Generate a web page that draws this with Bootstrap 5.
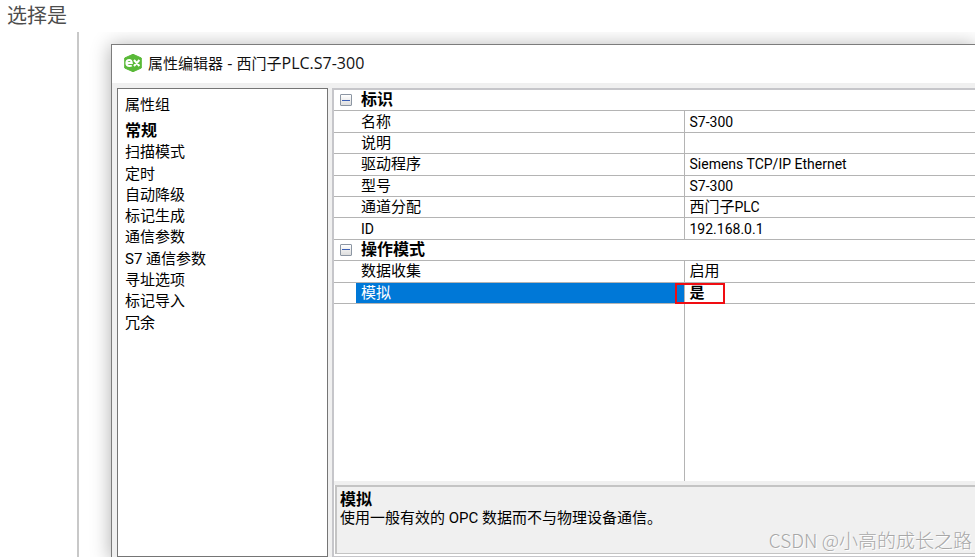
<!DOCTYPE html>
<html lang="zh-CN">
<head>
<meta charset="utf-8">
<meta name="viewport" content="width=device-width, initial-scale=1">
<title>属性编辑器</title>
<link href="https://cdn.jsdelivr.net/npm/bootstrap@5.3.0/dist/css/bootstrap.min.css" rel="stylesheet">
<style>
body{font-family:Roboto,"Noto Sans CJK SC",sans-serif;font-size:15px;line-height:20px;color:#000;background:#fff}
.intro{font-size:20px;line-height:32px;color:#4d4d4d;padding-left:7px}
.stage{margin-left:77px;border-left:2px solid #c8c8c8;padding:12px 0 0 32px;min-height:0}
.editor{border:solid #7c7c7c;border-width:1px 0 0 1px;background:#f0f0f0;box-shadow:0 2px 18px 1px rgba(0,0,0,.3);min-height:0}
.titlebar{height:38px;padding:0 0 2px 11px;gap:5px;font-family:"Open Sans","Noto Sans CJK SC",sans-serif;color:#111}
.titlebar .latin{font-size:16px}
.panes{padding:5px 0 0 5px;gap:4px;min-height:0}
.groups{width:211px;border:1px solid #757575;padding:5px 7px}
.group-title{line-height:22px;margin-bottom:5px}
.group-list{height:213px}
.group-list a{line-height:20px}
.group-list .current{font-size:16px}
.props{border:solid #c6c6ca;border-width:2px 0 1px 2px;min-width:0}
.values{height:214px;table-layout:fixed;margin:0}
.values td,.values th{padding:0;border-bottom:1px solid #b4b4b4;line-height:18px;font-weight:400;vertical-align:middle;white-space:nowrap}
.values .gutter{width:22px}
.values .key{width:328px}
.values th.key{padding-left:5px}
.values td{padding-left:5px;border-left:1px solid #b4b4b4}
.values th.section{font-size:16px;font-weight:700;padding-left:5px}
.values td,.values .latin{font-size:14px}
.values .cjk{font-size:15px}
.values .chosen{background:#0078d7;color:#fff}
.blank-key{width:351px;border-right:1px solid #b4b4b4}
.toggle{width:12px;height:12px;margin-left:6px;border:1px solid #8c96a3;border-radius:1px;background:linear-gradient(#fff,#ddd)}
.toggle span{width:8px;height:1px;background:#3b5fb5}
.marker{left:-10px;top:0;width:50px;height:21px;border:2px solid #f00d12}
.help{height:69px;border:solid #c4c4c4;border-width:2px 0 1px 2px;background:#f0f0f0;padding:3px 3px;line-height:19px;margin:0 0 2px 1px}
.help-title{font-size:16px}
.help-gap{height:4px;background:#f0f0f0}
.watermark{right:3px;bottom:4px;font:300 19px/26px "Noto Sans CJK SC",sans-serif;color:#a8a8a8;text-shadow:1px 1px 0 #fff}
</style>
<script src="https://cdn.jsdelivr.net/npm/bootstrap@5.3.0/dist/js/bootstrap.bundle.min.js"></script>
</head>
<body>
<main class="vh-100 d-flex flex-column overflow-hidden position-relative">
  <p class="intro mb-0">选择是</p>
  <div class="stage flex-fill d-flex flex-column overflow-hidden">
    <section class="editor flex-fill d-flex flex-column">
      <header class="titlebar bg-white d-flex align-items-center flex-shrink-0">
        <svg width="20" height="20" viewBox="0 0 20 20" aria-hidden="true">
          <path d="M10 1.300 18.300 5v10L10 18.700 1.700 15V5z" fill="#59b938" stroke="#59b938" stroke-linejoin="round"/>
          <path d="M3.600 10h5.200C8.600 7.600 7.700 6.900 6.300 6.900 4.500 6.900 3.400 8.100 3.400 10s1.200 3.100 3.200 3.100c.9 0 1.600-.2 2.200-.6M11 7l5.400 6M16.400 7 11 13" fill="none" stroke="#fff" stroke-width="2"/>
        </svg>
        <span>属性编辑器<span class="latin"> - </span>西门子<span class="latin">PLC.S7-300</span></span>
      </header>
      <div class="panes flex-fill d-flex">
        <nav class="groups bg-white flex-shrink-0" aria-label="属性组">
          <div class="group-title">属性组</div>
          <div class="group-list d-flex flex-column">
            <a href="#" class="current flex-fill text-reset text-decoration-none fw-bold">常规</a>
            <a href="#" class="flex-fill text-reset text-decoration-none">扫描模式</a>
            <a href="#" class="flex-fill text-reset text-decoration-none">定时</a>
            <a href="#" class="flex-fill text-reset text-decoration-none">自动降级</a>
            <a href="#" class="flex-fill text-reset text-decoration-none">标记生成</a>
            <a href="#" class="flex-fill text-reset text-decoration-none">通信参数</a>
            <a href="#" class="flex-fill text-reset text-decoration-none">S7 通信参数</a>
            <a href="#" class="flex-fill text-reset text-decoration-none">寻址选项</a>
            <a href="#" class="flex-fill text-reset text-decoration-none">标记导入</a>
            <a href="#" class="flex-fill text-reset text-decoration-none">冗余</a>
          </div>
        </nav>
        <div class="props bg-white flex-fill d-flex flex-column">
          <table class="values w-100">
            <colgroup><col class="gutter"><col class="key"><col></colgroup>
            <tbody>
              <tr><th><button type="button" class="toggle d-flex align-items-center justify-content-center p-0" aria-label="折叠标识"><span></span></button></th><th class="section" colspan="2">标识</th></tr>
              <tr><th></th><th class="key" scope="row">名称</th><td>S7-300</td></tr>
              <tr><th></th><th class="key" scope="row">说明</th><td></td></tr>
              <tr><th></th><th class="key" scope="row">驱动程序</th><td>Siemens TCP/IP Ethernet</td></tr>
              <tr><th></th><th class="key" scope="row">型号</th><td>S7-300</td></tr>
              <tr><th></th><th class="key" scope="row">通道分配</th><td><span class="cjk">西门子</span>PLC</td></tr>
              <tr><th></th><th class="key latin" scope="row">ID</th><td>192.168.0.1</td></tr>
              <tr><th><button type="button" class="toggle d-flex align-items-center justify-content-center p-0" aria-label="折叠操作模式"><span></span></button></th><th class="section" colspan="2">操作模式</th></tr>
              <tr><th></th><th class="key" scope="row">数据收集</th><td class="cjk">启用</td></tr>
              <tr><th></th><th class="key chosen" scope="row">模拟</th><td class="cjk fw-bold position-relative">是<span class="marker position-absolute"></span></td></tr>
            </tbody>
          </table>
          <div class="blank-key flex-fill"></div>
          <div class="help-gap"></div>
          <div class="help"><div class="help-title fw-bold">模拟</div><div>使用一般有效的 OPC 数据而不与物理设备通信。</div></div>
        </div>
      </div>
    </section>
  </div>
  <div class="watermark position-absolute">CSDN @小高的成长之路</div>
</main>
</body>
</html>
